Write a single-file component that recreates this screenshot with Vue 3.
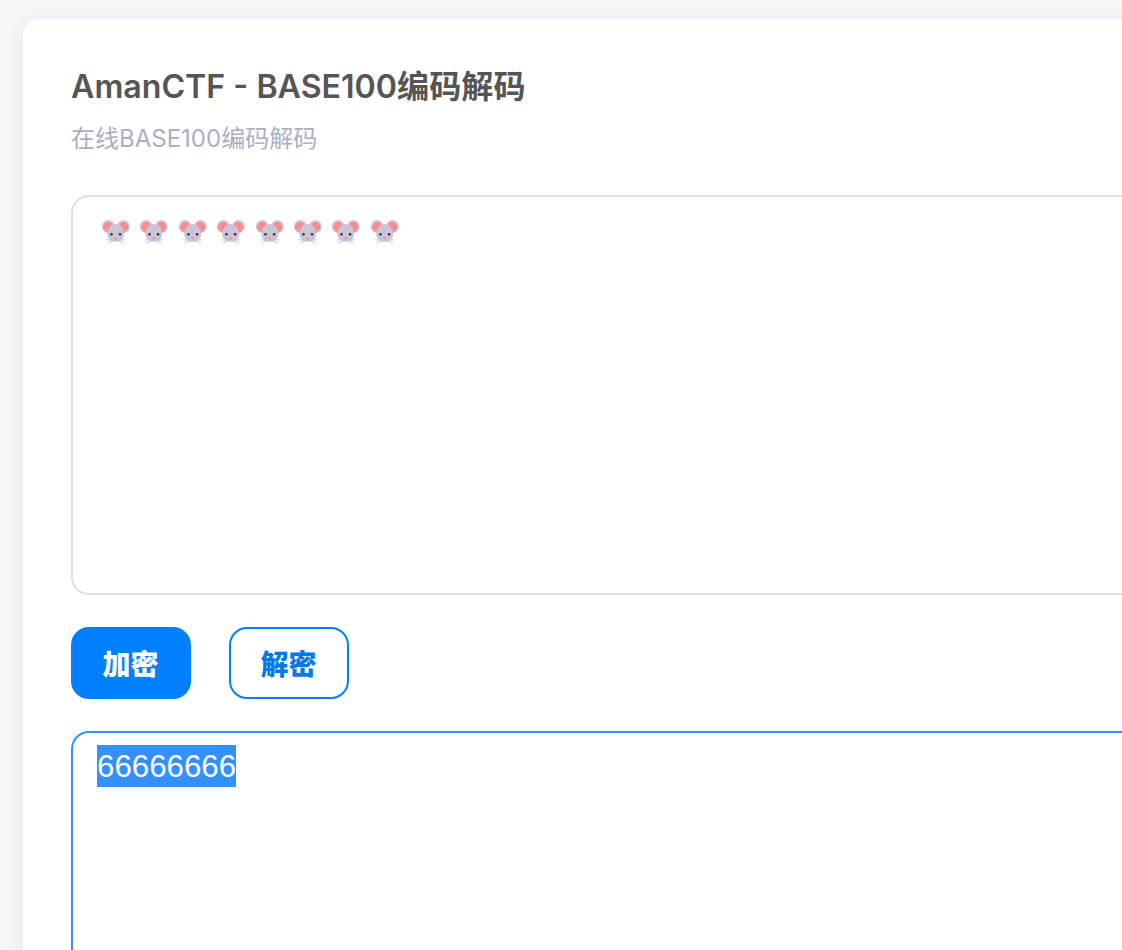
<script setup>
const mice = Array.from({ length: 8 }, (_, i) => i)
</script>

<template>
  <div class="page">
    <div class="card">
      <h1 class="title">AmanCTF - BASE100编码解码</h1>
      <p class="sub">在线BASE100编码解码</p>

      <div class="box box-in">
        <svg v-for="i in mice" :key="i" class="mouse" viewBox="0 0 30 26" width="30" height="26">
          <circle cx="7.200" cy="7.500" r="6.400" fill="#cdc6d8" />
          <circle cx="22.400" cy="7.500" r="6.400" fill="#cdc6d8" />
          <circle cx="7.300" cy="8.200" r="5.100" fill="#ff8a8f" />
          <circle cx="22.300" cy="8.200" r="5.100" fill="#ff8a8f" />
          <path d="M14.800 5c5 0 8.500 5 8.500 10 0 4.800-4.200 7.800-8.500 7.800s-8.500-3-8.500-7.800c0-5 3.500-10 8.500-10z" fill="#cbc4d6" />
          <circle cx="10.500" cy="15.200" r="1.200" fill="#2f2b35" />
          <circle cx="19.100" cy="15.200" r="1.200" fill="#2f2b35" />
          <path d="M13.300 18.800h3L14.800 20.800z" fill="#f8708a" />
          <path d="M11.500 21.200 5.500 20.800M11.500 22.300l-5 1.900M18 21.200l6-.4M18 22.300l5 1.900" stroke="#b5afbf" stroke-width=".7" fill="none" />
        </svg>
      </div>

      <div class="btns">
        <button class="btn btn-fill">加密</button>
        <button class="btn btn-line">解密</button>
      </div>

      <div class="box box-out">
        <span class="sel">66666666</span>
      </div>
    </div>
  </div>
</template>

<style scoped>
.page {
  height: 950px;
  overflow: hidden;
  background: #f6f7f9;
  padding: 19px 0 0 23px;
  box-sizing: border-box;
  font-family: Inter, "Noto Sans CJK SC", sans-serif;
}

.card {
  width: 1240px;
  height: 1200px;
  background: #fff;
  border-radius: 16px;
  box-shadow: 0 0 30px rgba(30, 40, 60, 0.06);
  padding: 47px 48px 0;
  box-sizing: border-box;
}

.title {
  margin: 0;
  font-size: 32.15px;
  line-height: 42px;
  font-weight: 600;
  color: #555;
}

.sub {
  margin: 13px 0 0;
  font-size: 24px;
  line-height: 36px;
  color: #aaaec8;
}

.box {
  border-radius: 18px;
  box-sizing: border-box;
  background: #fff;
}

.box-in {
  margin-top: 38px;
  height: 400px;
  border: 2px solid #e0e0e0;
  padding: 22px 0 0 28px;
  display: flex;
  align-items: flex-start;
  gap: 8.4px;
}

.mouse { flex-shrink: 0; }

.btns {
  display: flex;
  gap: 38px;
  margin-top: 32px;
}

.btn {
  width: 120px;
  height: 72px;
  border-radius: 18px;
  font-family: inherit;
  font-size: 28px;
  font-weight: 900;
  box-sizing: border-box;
  padding: 0 1px 0 0;
}

.btn-fill {
  background: #0080ff;
  border: 2px solid #0080ff;
  color: #fff;
}

.btn-line {
  background: #fff;
  border: 2px solid #0080ff;
  color: #0078f0;
}

.box-out {
  margin-top: 32px;
  height: 500px;
  border: 2px solid #3390ff;
  padding: 12px 0 0 24px;
}

.sel {
  display: inline-block;
  background: #3390ff;
  color: #fff;
  font-family: "Liberation Sans", sans-serif;
  font-size: 31.25px;
  line-height: 40px;
  padding-top: 2px;
}
</style>
